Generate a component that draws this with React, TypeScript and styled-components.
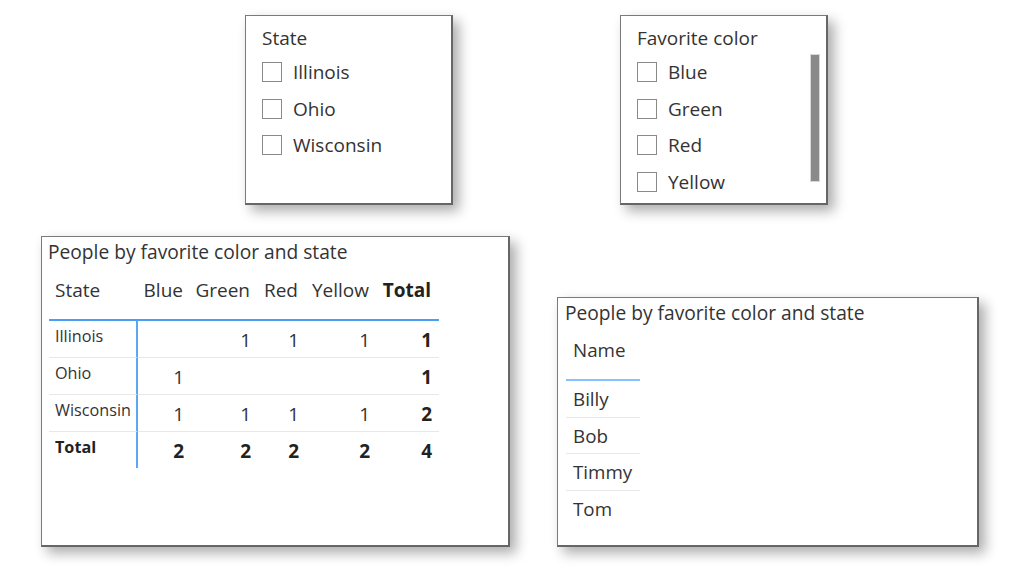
import React from "react";
import styled, { createGlobalStyle } from "styled-components";

const Global = createGlobalStyle`
  html, body { margin: 0; padding: 0; background: #ffffff; }
  body { font-family: "Open Sans", "Noto Sans", sans-serif; color: #333333; }
  * { box-sizing: border-box; }
`;

const Page = styled.div`
  width: 1024px;
  height: 579px;
  overflow: hidden;
  display: flex;
  flex-direction: column;
`;

const TopRow = styled.div`
  display: flex;
  align-items: flex-start;
  padding: 15px 0 0 245px;
  gap: 167px;
`;

const BottomRow = styled.div`
  display: flex;
  align-items: flex-start;
  padding: 0 0 0 41px;
  margin-top: 31px;
  gap: 47px;
`;

const Card = styled.div<{ $w: number; $h: number; $top?: number }>`
  width: ${(p) => p.$w}px;
  height: ${(p) => p.$h}px;
  margin-top: ${(p) => p.$top ?? 0}px;
  background: #ffffff;
  border: 1px solid #7a7a7a;
  border-right: 2px solid #666666;
  border-bottom: 2px solid #666666;
  box-shadow: 6px 6px 12px rgba(0, 0, 0, 0.33);
  overflow: hidden;
`;

/* ---------- Slicer ---------- */
const Slicer = styled(Card)`
  padding: 10px 0 0 16px;
  display: flex;
  flex-direction: column;
`;

const SlicerHeader = styled.div`
  font-size: 19px;
  line-height: 24px;
  height: 24px;
  margin-bottom: 4px;
  color: #333;
  white-space: nowrap;
`;

const SlicerBody = styled.div`
  display: flex;
  align-items: flex-start;
`;

const ItemList = styled.div`
  flex: 1;
  display: flex;
  flex-direction: column;
`;

const Item = styled.div`
  height: 36.5px;
  display: flex;
  align-items: center;
  gap: 11px;
  font-size: 19px;
  color: #333;
  white-space: nowrap;
`;

const Box = styled.span`
  width: 20px;
  height: 20px;
  border: 1px solid #8a8a8a;
  background: #fff;
  flex: none;
`;

const ScrollThumb = styled.div`
  width: 10px;
  height: 128px;
  background: #8a8a8a;
  margin-right: 6px;
  border: 1px solid #d8d8d8;
  flex: none;
`;

/* ---------- Visual title ---------- */
const VisualTitle = styled.div<{ $pad: number }>`
  font-size: 19.2px;
  line-height: 24px;
  height: 24px;
  padding-left: ${(p) => p.$pad}px;
  color: #333;
  white-space: nowrap;
`;

/* ---------- Matrix ---------- */
const Matrix = styled(Card)`
  padding-top: 3px;
`;

const Grid = styled.div`
  display: grid;
  grid-template-columns: 89px 53px 67px 48px 71px 62px;
  margin-left: 7px;
  width: 390px;
`;

const HeadCell = styled.div<{ $bold?: boolean; $right?: boolean }>`
  font-size: 19px;
  line-height: 24px;
  padding: 14px ${(p) => (p.$right ? 8 : 0)}px 17px ${(p) => (p.$right ? 0 : 6)}px;
  text-align: ${(p) => (p.$right ? "right" : "left")};
  font-weight: ${(p) => (p.$bold ? 700 : 400)};
  color: ${(p) => (p.$bold ? "#222" : "#333")};
  border-bottom: 2px solid #4a9ff5;
  white-space: nowrap;
`;

const RowHead = styled.div<{ $bold?: boolean; $last?: boolean }>`
  height: ${(p) => (p.$last ? 36 : 37)}px;
  font-size: 16.2px;
  line-height: 20px;
  padding: 5px 0 0 6px;
  font-weight: ${(p) => (p.$bold ? 700 : 400)};
  color: ${(p) => (p.$bold ? "#222" : "#333")};
  border-right: 2px solid #5aa7f2;
  border-bottom: ${(p) => (p.$last ? "none" : "1px solid #e8e8e8")};
  white-space: nowrap;
`;

const Val = styled.div<{ $bold?: boolean; $last?: boolean }>`
  height: ${(p) => (p.$last ? 36 : 37)}px;
  font-size: 19px;
  line-height: 24px;
  padding: 7px 7px 0 0;
  text-align: right;
  font-weight: ${(p) => (p.$bold ? 700 : 400)};
  color: ${(p) => (p.$bold ? "#222" : "#333")};
  border-bottom: ${(p) => (p.$last ? "none" : "1px solid #e8e8e8")};
`;

/* ---------- Table ---------- */
const TableCard = styled(Card)`
  padding-top: 3px;
`;

const NameCol = styled.div`
  width: 74px;
  margin-left: 8px;
  display: flex;
  flex-direction: column;
`;

const NameHead = styled.div`
  font-size: 18.8px;
  line-height: 24px;
  padding: 13px 0 17px 7px;
  border-bottom: 2px solid #86c2fb;
  color: #333;
`;

const NameCell = styled.div<{ $last?: boolean }>`
  height: 36.7px;
  font-size: 18.8px;
  line-height: 24px;
  padding: 6px 0 0 7px;
  border-bottom: ${(p) => (p.$last ? "none" : "1px solid #e8e8e8")};
  color: #333;
`;

const matrixCols = ["Blue", "Green", "Red", "Yellow"];
const matrixRows: { name: string; vals: string[]; total: string; bold?: boolean }[] = [
  { name: "Illinois", vals: ["", "1", "1", "1"], total: "1" },
  { name: "Ohio", vals: ["1", "", "", ""], total: "1" },
  { name: "Wisconsin", vals: ["1", "1", "1", "1"], total: "2" },
  { name: "Total", vals: ["2", "2", "2", "2"], total: "4", bold: true },
];

const SlicerCard: React.FC<{ title: string; items: string[]; scroll?: boolean }> = ({
  title,
  items,
  scroll,
}) => (
  <Slicer $w={208} $h={190}>
    <SlicerHeader>{title}</SlicerHeader>
    <SlicerBody>
      <ItemList>
        {items.map((it) => (
          <Item key={it}>
            <Box />
            {it}
          </Item>
        ))}
      </ItemList>
      {scroll && <ScrollThumb />}
    </SlicerBody>
  </Slicer>
);

export default function App() {
  return (
    <Page>
      <Global />
      <TopRow>
        <SlicerCard title="State" items={["Illinois", "Ohio", "Wisconsin"]} />
        <SlicerCard title="Favorite color" items={["Blue", "Green", "Red", "Yellow"]} scroll />
      </TopRow>
      <BottomRow>
        <Matrix $w={469} $h={311}>
          <VisualTitle $pad={6}>People by favorite color and state</VisualTitle>
          <Grid>
            <HeadCell>State</HeadCell>
            {matrixCols.map((c) => (
              <HeadCell key={c} $right>
                {c}
              </HeadCell>
            ))}
            <HeadCell $right $bold>
              Total
            </HeadCell>
            {matrixRows.map((r, i) => {
              const last = i === matrixRows.length - 1;
              return (
                <React.Fragment key={r.name}>
                  <RowHead $bold={r.bold} $last={last}>
                    {r.name}
                  </RowHead>
                  {r.vals.map((v, j) => (
                    <Val key={j} $bold={r.bold} $last={last}>
                      {v}
                    </Val>
                  ))}
                  <Val $bold $last={last}>
                    {r.total}
                  </Val>
                </React.Fragment>
              );
            })}
          </Grid>
        </Matrix>
        <TableCard $w={422} $h={250} $top={61}>
          <VisualTitle $pad={7}>People by favorite color and state</VisualTitle>
          <NameCol>
            <NameHead>Name</NameHead>
            {["Billy", "Bob", "Timmy", "Tom"].map((n, i) => (
              <NameCell key={n} $last={i === 3}>
                {n}
              </NameCell>
            ))}
          </NameCol>
        </TableCard>
      </BottomRow>
    </Page>
  );
}
